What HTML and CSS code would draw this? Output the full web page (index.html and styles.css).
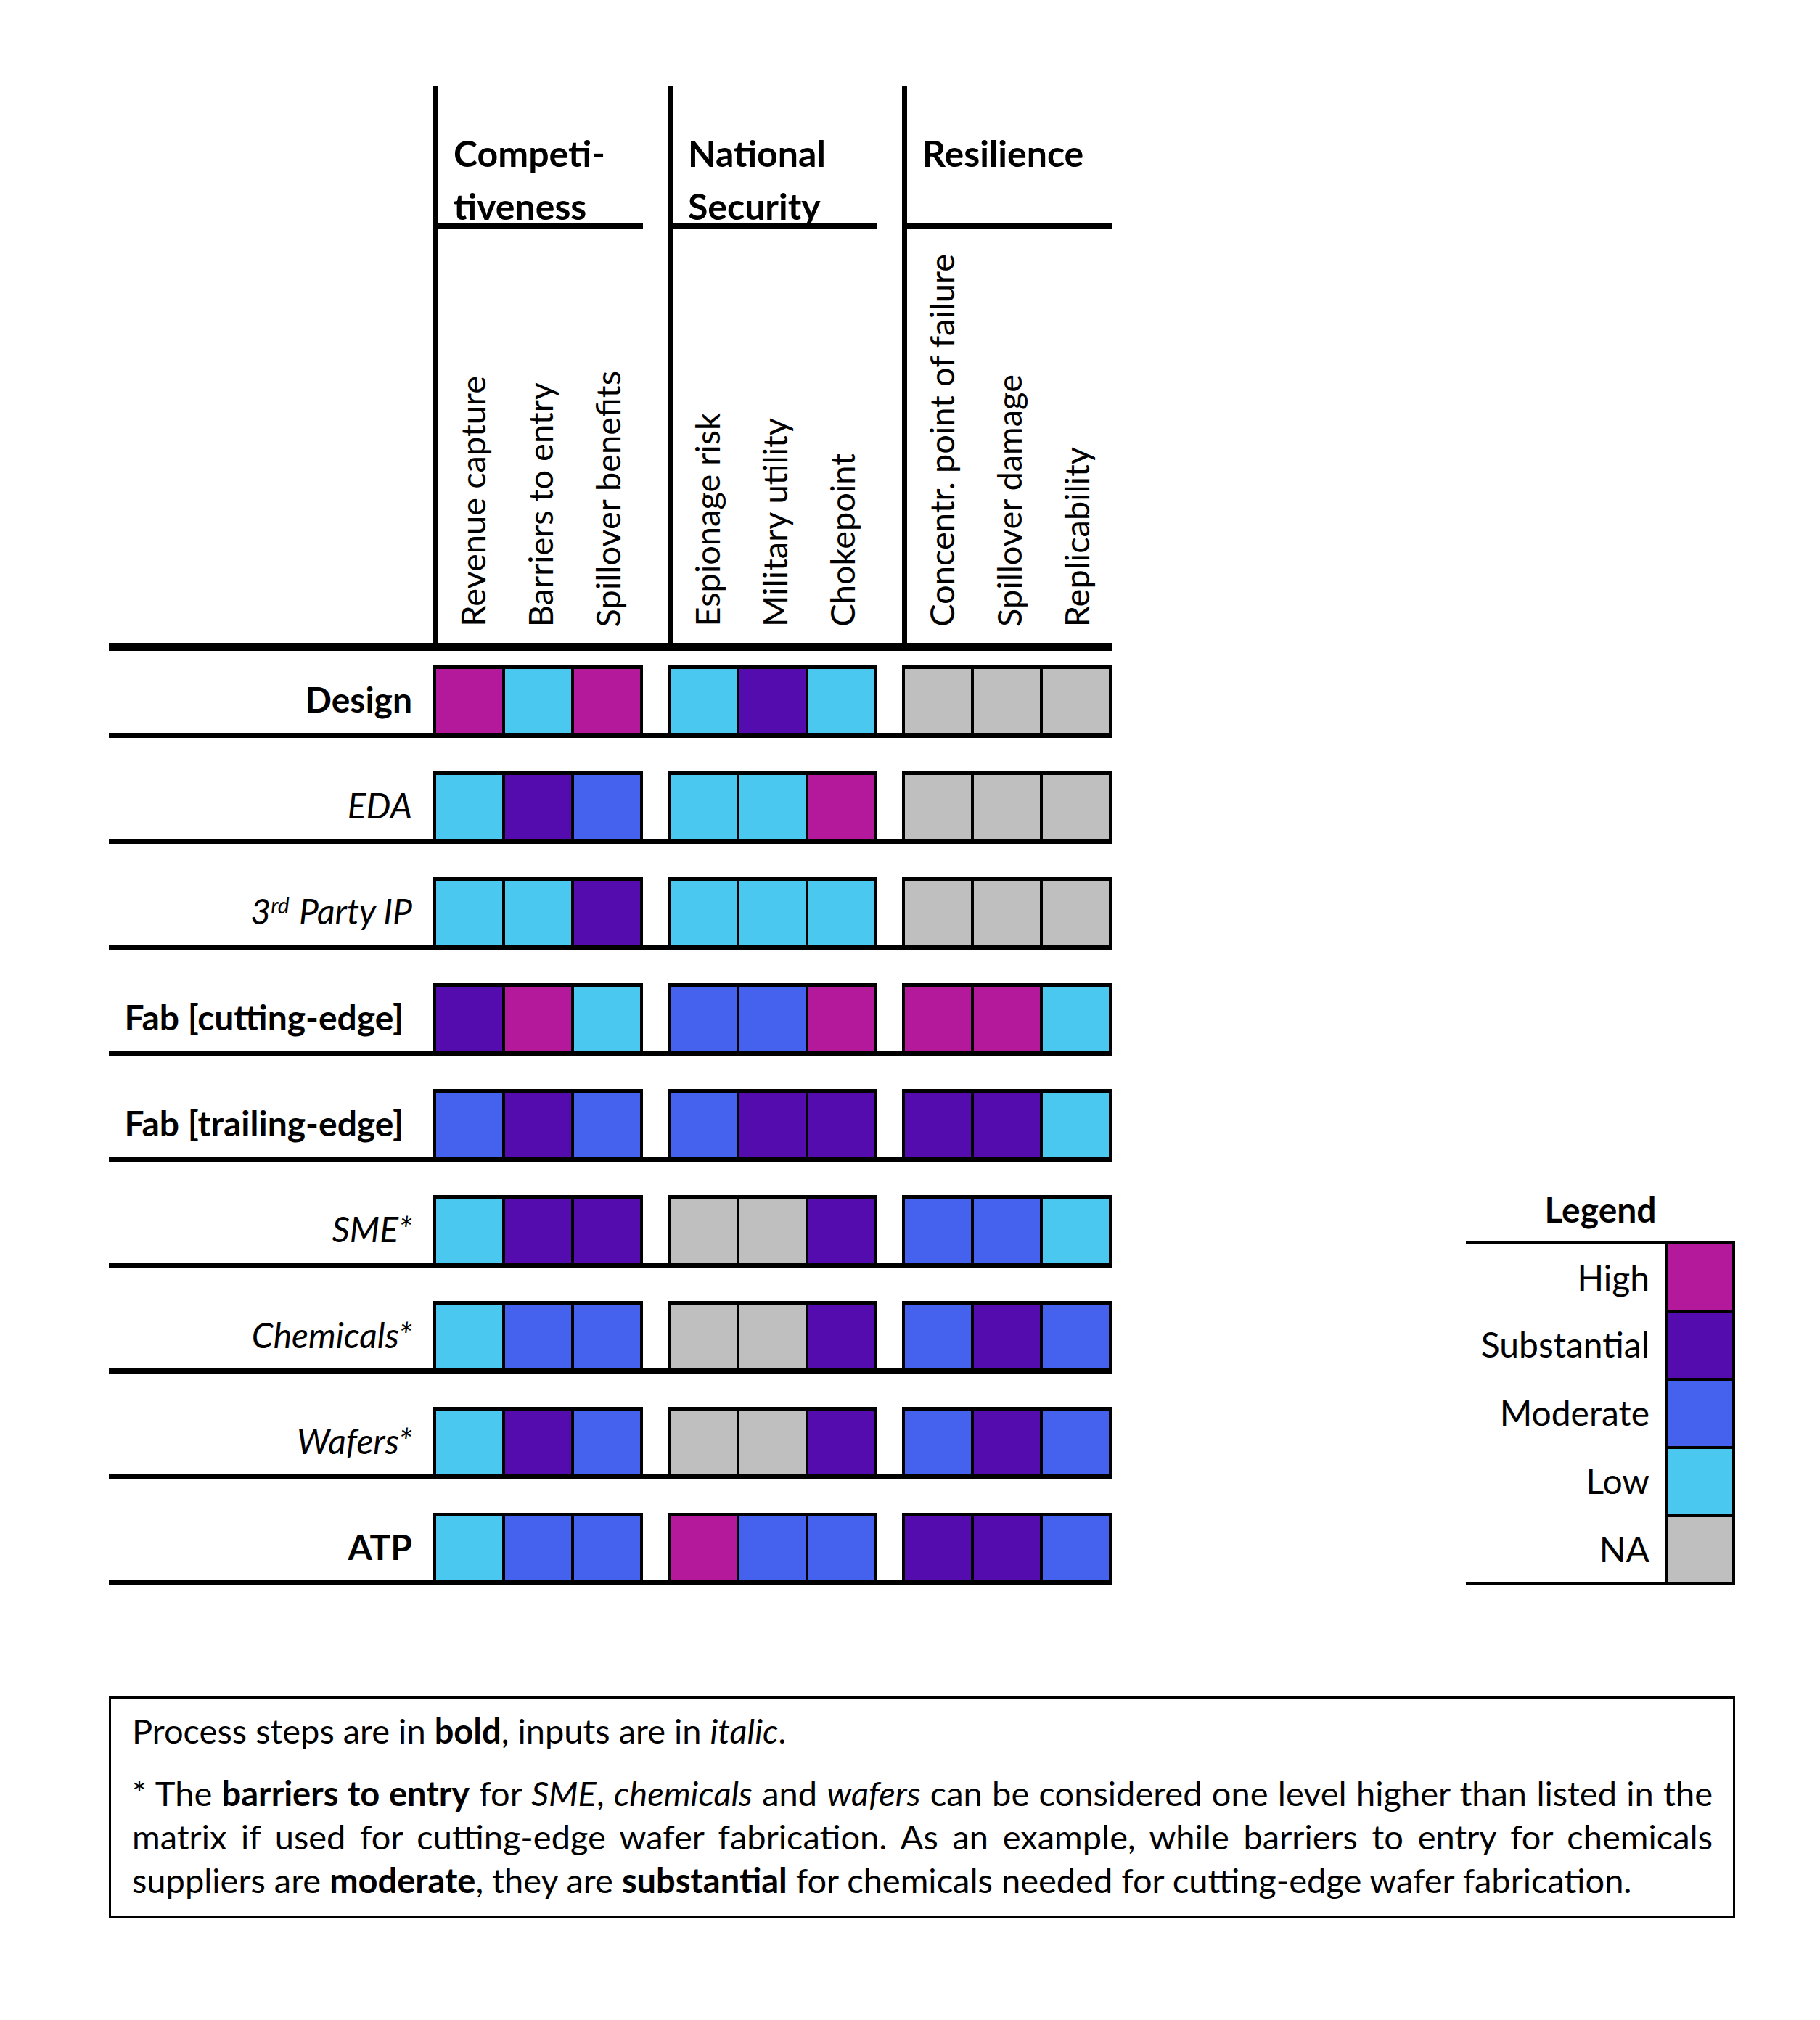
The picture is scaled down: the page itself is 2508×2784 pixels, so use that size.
FILE: index.html
```html
<!DOCTYPE html>
<html lang="en">
<head>
<meta charset="utf-8">
<title>Semiconductor value chain matrix</title>
<link rel="stylesheet" href="styles.css">
</head>
<body>
<div class="page">
  <div class="top">
    <div class="matrix">
      <div class="head">
        <div class="head-spacer"></div>
        <div class="ghead">
          <div class="gtitle">Competi-<br>tiveness</div>
          <div class="glabels">
            <div class="lab"><span>Revenue capture</span></div>
            <div class="lab"><span>Barriers to entry</span></div>
            <div class="lab"><span>Spillover benefits</span></div>
          </div>
        </div>
        <div class="ghead">
          <div class="gtitle">National<br>Security</div>
          <div class="glabels">
            <div class="lab"><span>Espionage risk</span></div>
            <div class="lab"><span>Military utility</span></div>
            <div class="lab"><span>Chokepoint</span></div>
          </div>
        </div>
        <div class="ghead">
          <div class="gtitle">Resilience</div>
          <div class="glabels">
            <div class="lab"><span>Concentr. point of failure</span></div>
            <div class="lab"><span>Spillover damage</span></div>
            <div class="lab"><span>Replicability</span></div>
          </div>
        </div>
      </div>
      <div class="rule"></div>
      <div class="rows">
        <div class="row">
          <div class="rlabel bold">Design</div>
          <div class="grp"><i class="c h"></i><i class="c l"></i><i class="c h"></i></div>
          <div class="grp"><i class="c l"></i><i class="c s"></i><i class="c l"></i></div>
          <div class="grp"><i class="c n"></i><i class="c n"></i><i class="c n"></i></div>
        </div>
        <div class="row">
          <div class="rlabel ital">EDA</div>
          <div class="grp"><i class="c l"></i><i class="c s"></i><i class="c m"></i></div>
          <div class="grp"><i class="c l"></i><i class="c l"></i><i class="c h"></i></div>
          <div class="grp"><i class="c n"></i><i class="c n"></i><i class="c n"></i></div>
        </div>
        <div class="row">
          <div class="rlabel ital">3<sup>rd</sup>&nbsp;Party IP</div>
          <div class="grp"><i class="c l"></i><i class="c l"></i><i class="c s"></i></div>
          <div class="grp"><i class="c l"></i><i class="c l"></i><i class="c l"></i></div>
          <div class="grp"><i class="c n"></i><i class="c n"></i><i class="c n"></i></div>
        </div>
        <div class="row">
          <div class="rlabel bold fab">Fab [cutting-edge]</div>
          <div class="grp"><i class="c s"></i><i class="c h"></i><i class="c l"></i></div>
          <div class="grp"><i class="c m"></i><i class="c m"></i><i class="c h"></i></div>
          <div class="grp"><i class="c h"></i><i class="c h"></i><i class="c l"></i></div>
        </div>
        <div class="row">
          <div class="rlabel bold fab">Fab [trailing-edge]</div>
          <div class="grp"><i class="c m"></i><i class="c s"></i><i class="c m"></i></div>
          <div class="grp"><i class="c m"></i><i class="c s"></i><i class="c s"></i></div>
          <div class="grp"><i class="c s"></i><i class="c s"></i><i class="c l"></i></div>
        </div>
        <div class="row">
          <div class="rlabel ital">SME*</div>
          <div class="grp"><i class="c l"></i><i class="c s"></i><i class="c s"></i></div>
          <div class="grp"><i class="c n"></i><i class="c n"></i><i class="c s"></i></div>
          <div class="grp"><i class="c m"></i><i class="c m"></i><i class="c l"></i></div>
        </div>
        <div class="row">
          <div class="rlabel ital">Chemicals*</div>
          <div class="grp"><i class="c l"></i><i class="c m"></i><i class="c m"></i></div>
          <div class="grp"><i class="c n"></i><i class="c n"></i><i class="c s"></i></div>
          <div class="grp"><i class="c m"></i><i class="c s"></i><i class="c m"></i></div>
        </div>
        <div class="row">
          <div class="rlabel ital">Wafers*</div>
          <div class="grp"><i class="c l"></i><i class="c s"></i><i class="c m"></i></div>
          <div class="grp"><i class="c n"></i><i class="c n"></i><i class="c s"></i></div>
          <div class="grp"><i class="c m"></i><i class="c s"></i><i class="c m"></i></div>
        </div>
        <div class="row">
          <div class="rlabel bold">ATP</div>
          <div class="grp"><i class="c l"></i><i class="c m"></i><i class="c m"></i></div>
          <div class="grp"><i class="c h"></i><i class="c m"></i><i class="c m"></i></div>
          <div class="grp"><i class="c s"></i><i class="c s"></i><i class="c m"></i></div>
        </div>
      </div>
    </div>

    <div class="legend">
      <div class="ltitle">Legend</div>
      <div class="ltable">
        <div class="lrow"><div class="ltext">High</div><div class="sw h"></div></div>
        <div class="lrow"><div class="ltext">Substantial</div><div class="sw s"></div></div>
        <div class="lrow"><div class="ltext">Moderate</div><div class="sw m"></div></div>
        <div class="lrow"><div class="ltext">Low</div><div class="sw l"></div></div>
        <div class="lrow"><div class="ltext">NA</div><div class="sw n"></div></div>
      </div>
    </div>
  </div>

  <div class="note">
    <p>Process steps are in <b>bold</b>, inputs are in <i>italic</i>.</p>
    <p class="just">
      <span class="ln">* The <b>barriers to entry</b> for <i>SME</i>, <i>chemicals</i> and <i>wafers</i> can be considered one level higher than listed in the</span>
      <span class="ln">matrix if used for cutting-edge wafer fabrication. As an example, while barriers to entry for chemicals</span>
      <span class="ln last">suppliers are <b>moderate</b>, they are <b>substantial</b> for chemicals needed for cutting-edge wafer fabrication.</span>
    </p>
  </div>
</div>
</body>
</html>
```

FILE: styles.css
```css
html, body {
  margin: 0;
  padding: 0;
  background: #ffffff;
}

body {
  font-family: "Lato", "Open Sans", "DejaVu Sans", sans-serif;
  color: #000000;
}

.page {
  width: 2241px;
  padding: 118px 0 140px 150px;
}

.top {
  display: flex;
  justify-content: space-between;
  align-items: flex-end;
}

.matrix {
  width: 1382px;
  flex: none;
}

/* ---------- header ---------- */
.head {
  display: flex;
  height: 768px;
}

.head-spacer {
  width: 447px;
  flex: none;
}

.ghead {
  width: 289px;
  flex: none;
  box-sizing: border-box;
  border-left: 7px solid #000;
  display: flex;
  flex-direction: column;
}

.ghead + .ghead {
  margin-left: 34px;
}

.gtitle {
  height: 198px;
  box-sizing: border-box;
  border-bottom: 8px solid #000;
  padding: 57px 0 0 21px;
  font-size: 50px;
  font-weight: 700;
  line-height: 73px;
  white-space: nowrap;
}

.glabels {
  flex: 1;
  display: flex;
  padding-bottom: 22px;
}

.lab {
  width: 93px;
  flex: none;
  display: flex;
  justify-content: center;
  align-items: flex-end;
}

.lab span {
  writing-mode: vertical-rl;
  transform: rotate(180deg);
  font-size: 47px;
  line-height: 60px;
  white-space: nowrap;
}

.rule {
  height: 11px;
  background: #000;
  margin-bottom: 20px;
}

/* ---------- rows ---------- */
.row {
  display: flex;
  height: 93px;
  border-bottom: 7px solid #000;
}

.row + .row {
  margin-top: 46px;
}

.rlabel {
  width: 447px;
  flex: none;
  box-sizing: border-box;
  padding-right: 29px;
  display: flex;
  align-items: center;
  justify-content: flex-end;
  font-size: 48px;
  white-space: nowrap;
}

.rlabel.fab {
  padding-right: 41px;
}

.bold {
  font-weight: 700;
}

.ital {
  font-style: italic;
}

.rlabel sup {
  font-size: 30px;
  line-height: 0;
  position: relative;
  top: -9px;
  margin-right: 2px;
}

.grp {
  width: 289px;
  flex: none;
  box-sizing: border-box;
  display: flex;
  border-left: 4px solid #000;
  border-top: 5px solid #000;
}

.grp + .grp {
  margin-left: 34px;
}

.c {
  display: block;
  width: 91px;
  flex: none;
  border-right: 4px solid #000;
}

/* ---------- colours ---------- */
.h { background: #b4189b; }
.s { background: #540cae; }
.m { background: #4562ee; }
.l { background: #4bc8ef; }
.n { background: #bfbfbf; }

/* ---------- legend ---------- */
.legend {
  width: 371px;
  flex: none;
}

.ltitle {
  text-align: center;
  font-size: 48px;
  font-weight: 700;
  line-height: 60px;
  margin-bottom: 14px;
}

.ltable {
  border-top: 4px solid #000;
  border-bottom: 4px solid #000;
}

.lrow {
  display: flex;
  height: 90px;
}

.lrow + .lrow .sw {
  border-top: 4px solid #000;
}

.lrow + .lrow {
  height: 94px;
}

.ltext {
  flex: 1;
  align-self: center;
  text-align: right;
  padding-right: 22px;
  font-size: 48px;
}

.sw {
  width: 88px;
  flex: none;
  border-left: 4px solid #000;
  border-right: 4px solid #000;
}

/* ---------- note ---------- */
.note {
  margin-top: 153px;
  box-sizing: border-box;
  width: 100%;
  border: 3px solid #000;
  padding: 14px 28px 20px 29px;
  font-size: 47px;
  line-height: 60px;
}

.note p {
  margin: 0;
}

.note p + p {
  margin-top: 26px;
}

.note .ln {
  display: block;
  white-space: nowrap;
  word-spacing: -3px;
  text-align: justify;
  text-align-last: justify;
}

.note .ln.last {
  word-spacing: 0;
  text-align: left;
  text-align-last: left;
}
```
